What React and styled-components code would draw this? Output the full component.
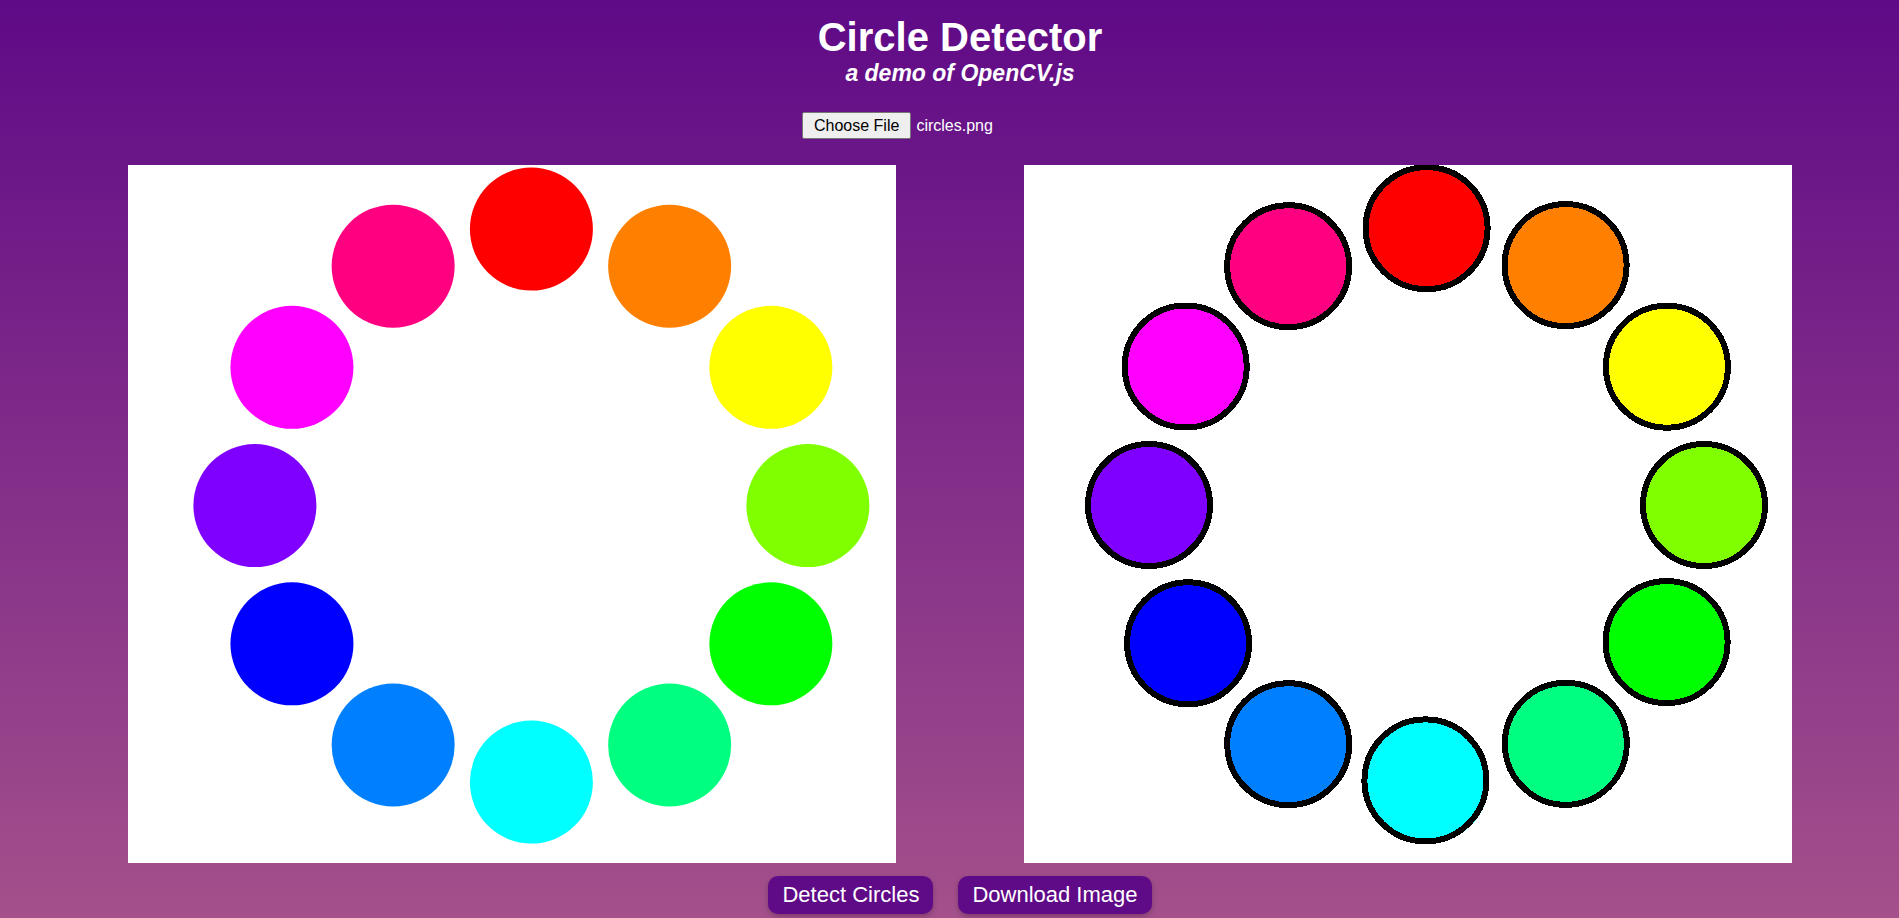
import React from "react";
import styled, { createGlobalStyle } from "styled-components";

const GlobalStyle = createGlobalStyle`
  html, body {
    margin: 0;
    padding: 0;
  }
  body {
    font-family: "Liberation Sans", Arial, sans-serif;
    overflow: hidden;
  }
`;

const Page = styled.div`
  box-sizing: border-box;
  min-height: 100vh;
  padding: 14px 0 0 21px;
  background: linear-gradient(to bottom, #5f0a87, #a4508b);
  display: flex;
  flex-direction: column;
  align-items: center;
  color: #fff;
`;

const Title = styled.h1`
  margin: 0;
  font-size: 40px;
  line-height: 46px;
  font-weight: bold;
`;

const Subtitle = styled.h2`
  margin: 0;
  font-size: 23px;
  line-height: 26px;
  font-weight: bold;
  font-style: italic;
`;

const FilePicker = styled.div`
  margin-top: 26px;
  width: 316px;
  display: flex;
  align-items: center;
  gap: 5px;
  font-size: 16px;
`;

const ChooseButton = styled.button`
  box-sizing: border-box;
  height: 27px;
  padding: 0 11px;
  font-family: inherit;
  font-size: 16px;
  color: #000;
  background: #efefef;
  border: 1px solid #767676;
  border-radius: 2px;
`;

const FileName = styled.span`
  color: #fff;
`;

const CanvasRow = styled.div`
  margin-top: 26px;
  display: flex;
  gap: 128px;
`;

const Canvas = styled.div`
  width: 768px;
  height: 698px;
  background: #fff;
  svg {
    display: block;
  }
`;

const Actions = styled.div`
  margin-top: 13px;
  display: flex;
  gap: 25px;
`;

const ActionButton = styled.button`
  height: 38px;
  padding: 0 14px;
  border: none;
  border-radius: 10px;
  background: #5f0a87;
  color: #fff;
  font-family: inherit;
  font-size: 22px;
  box-shadow: 0 2px 5px rgba(0, 0, 0, 0.25);
  cursor: pointer;
`;

const colors = [
  "#ff0000", "#ff8000", "#ffff00", "#80ff00", "#00ff00", "#00ff80",
  "#00ffff", "#0080ff", "#0000ff", "#8000ff", "#ff00ff", "#ff0080",
];

const CX = 403.4;
const CY = 340.6;
const RING = 276.5;

const dots = colors.map((fill, i) => {
  const a = (i * Math.PI) / 6;
  return { fill, x: CX + RING * Math.sin(a), y: CY - RING * Math.cos(a) };
});

// where the detector put each circle (a little off here and there)
const detected = [
  [402.6, 63.2],
  [541.6, 100.1],
  [642.9, 201.7],
  [680, 340],
  [642.6, 477.1],
  [541.8, 578.8],
  [401.4, 615.4],
  [264.2, 579.2],
  [164.1, 478.3],
  [125, 340],
  [161.7, 201.5],
  [264.2, 101.2],
];

const Dots = () =>
  dots.map((d) => <circle key={d.fill} cx={d.x} cy={d.y} r={61.5} fill={d.fill} />);

const App = () => (
  <Page>
    <GlobalStyle />
    <Title>Circle Detector</Title>
    <Subtitle>a demo of OpenCV.js</Subtitle>
    <FilePicker>
      <ChooseButton>Choose File</ChooseButton>
      <FileName>circles.png</FileName>
    </FilePicker>
    <CanvasRow>
      <Canvas>
        <svg width="768" height="698" viewBox="0 0 768 698">
          <Dots />
        </svg>
      </Canvas>
      <Canvas>
        <svg width="768" height="698" viewBox="0 0 768 698">
          <Dots />
          {detected.map(([x, y], i) => (
            <circle
              key={i}
              cx={x}
              cy={y}
              r={61}
              fill="none"
              stroke="#000"
              strokeWidth="6"
              shapeRendering="crispEdges"
            />
          ))}
        </svg>
      </Canvas>
    </CanvasRow>
    <Actions>
      <ActionButton>Detect Circles</ActionButton>
      <ActionButton>Download Image</ActionButton>
    </Actions>
  </Page>
);

export default App;
